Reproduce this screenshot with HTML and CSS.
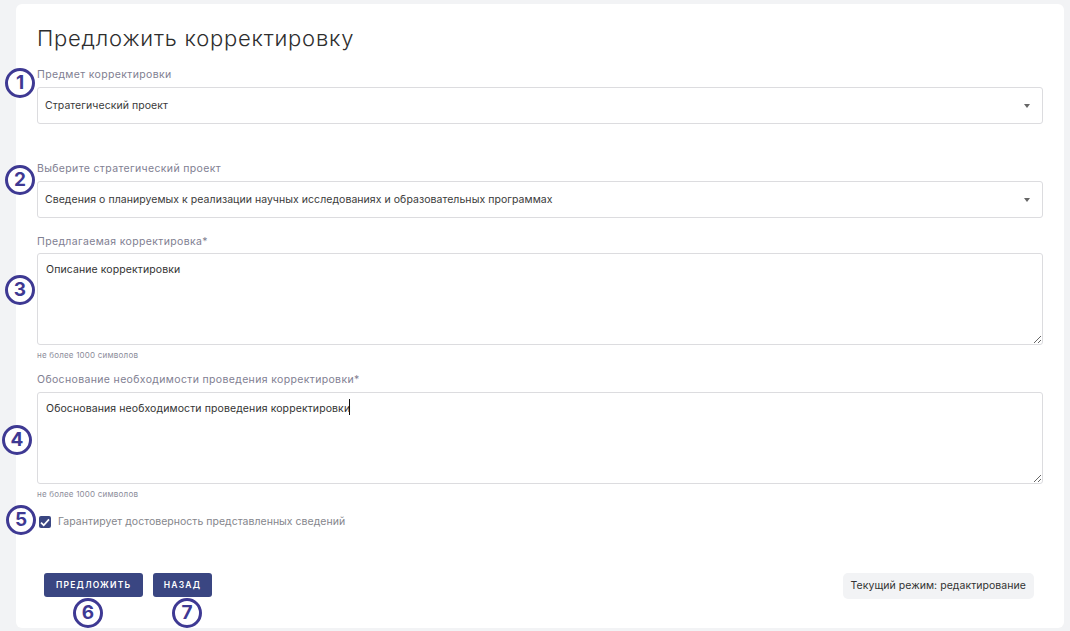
FILE: index.html
```html
<!DOCTYPE html>
<html lang="ru">
<head>
    <meta charset="UTF-8">
    <title>Предложить корректировку</title>
    <link rel="stylesheet" href="styles.css">
</head>
<body>
    <div class="card">
        <h1 class="title">Предложить корректировку</h1>

        <div class="field field-subject">
            <label class="field-label">Предмет корректировки</label>
            <div class="select-box">
                <span>Стратегический проект</span>
                <span class="select-arrow"></span>
            </div>
        </div>

        <div class="field field-project">
            <label class="field-label">Выберите стратегический проект</label>
            <div class="select-box">
                <span>Сведения о планируемых к реализации научных исследованиях и образовательных программах</span>
                <span class="select-arrow"></span>
            </div>
        </div>

        <div class="field field-text">
            <label class="field-label">Предлагаемая корректировка*</label>
            <textarea class="text-box" readonly>Описание корректировки</textarea>
            <p class="field-hint">не более 1000 символов</p>
        </div>

        <div class="field field-reason">
            <label class="field-label">Обоснование необходимости проведения корректировки*</label>
            <div class="text-wrap">
                <textarea class="text-box" readonly>Обоснования необходимости проведения корректировки</textarea>
                <span class="caret"></span>
            </div>
            <p class="field-hint">не более 1000 символов</p>
        </div>

        <label class="check-row">
            <span class="check-box">
                <svg width="10" height="9" viewBox="0 0 10 9"><path d="M1 4.6 3.7 7.2 9 1.4" fill="none" stroke="#fff" stroke-width="1.7"/></svg>
            </span>
            Гарантирует достоверность представленных сведений
        </label>

        <div class="footer">
            <div class="buttons">
                <button class="btn btn-main">ПРЕДЛОЖИТЬ</button>
                <button class="btn">НАЗАД</button>
            </div>
            <div class="mode-badge">Текущий режим: редактирование</div>
        </div>

        <span class="marker m1">1</span>
        <span class="marker m2">2</span>
        <span class="marker m3">3</span>
        <span class="marker m4">4</span>
        <span class="marker m5">5</span>
        <span class="marker m6">6</span>
        <span class="marker m7">7</span>
    </div>
</body>
</html>
```

FILE: styles.css
```css
* {
    box-sizing: border-box;
}

html, body {
    height: 100%;
}

body {
    margin: 0;
    padding: 4px 6px 3px 16px;
    background: #f2f3f5;
    font-family: Inter, "Open Sans", sans-serif;
    color: #2b2b2b;
    overflow: hidden;
}

.card {
    position: relative;
    height: 624px;
    padding: 21px 21px 0 21px;
    background: #fff;
    border-radius: 6px;
}

.title {
    margin: 0;
    font-size: 22px;
    line-height: 27px;
    font-weight: 300;
    letter-spacing: 0.77px;
    color: #2e2e2e;
}

.field-label {
    display: block;
    font-size: 10.5px;
    line-height: 14px;
    letter-spacing: 0.35px;
    color: #7f8092;
}

.field-subject {
    margin-top: 16px;
}

.field-project {
    margin-top: 38px;
}

.field-text {
    margin-top: 17px;
}

.field-reason {
    margin-top: 12px;
}

.select-box {
    display: flex;
    justify-content: space-between;
    align-items: center;
    height: 37px;
    margin-top: 5px;
    padding: 0 12px 0 7px;
    border: 1px solid #dcdcdf;
    border-radius: 3px;
    font-size: 10.5px;
    letter-spacing: 0.05px;
    color: #3a3a3a;
}

.select-arrow {
    width: 0;
    height: 0;
    border-left: 3.5px solid transparent;
    border-right: 3.5px solid transparent;
    border-top: 4px solid #666;
}

.text-wrap {
    position: relative;
}

.text-box {
    display: block;
    width: 100%;
    height: 92px;
    margin-top: 4px;
    padding: 8px;
    border: 1px solid #dcdcdf;
    border-radius: 3px;
    outline: none;
    font-family: inherit;
    font-size: 10.5px;
    line-height: 16px;
    letter-spacing: 0.1px;
    color: #333;
}

.field-reason .text-box {
    margin-top: 5px;
}

.caret {
    position: absolute;
    left: 312px;
    top: 7px;
    width: 1px;
    height: 16px;
    background: #111;
}

.field-hint {
    margin: 5px 0 0;
    font-size: 8px;
    line-height: 11px;
    letter-spacing: 0.2px;
    color: #8b8c9a;
}

.check-row {
    display: flex;
    align-items: center;
    gap: 7px;
    margin: 15px 0 0 2px;
    font-size: 10.5px;
    line-height: 14px;
    letter-spacing: 0.02px;
    color: #85868c;
}

.check-box {
    display: flex;
    align-items: center;
    justify-content: center;
    width: 12px;
    height: 12px;
    border-radius: 2px;
    background: #3a4682;
}

.footer {
    display: flex;
    justify-content: space-between;
    align-items: flex-start;
    margin-top: 44px;
    padding: 0 9px 0 7px;
}

.buttons {
    display: flex;
    gap: 10px;
}

.btn {
    height: 24px;
    padding: 0 10.5px;
    border: none;
    border-radius: 3px;
    background: #3a4682;
    color: #fff;
    font-family: inherit;
    font-size: 8.5px;
    font-weight: 600;
    letter-spacing: 1.2px;
}

.btn-main {
    padding: 0 12px;
}

.mode-badge {
    height: 26px;
    padding: 0 8px;
    border-radius: 5px;
    background: #f2f3f5;
    font-size: 10.5px;
    line-height: 26px;
    letter-spacing: 0.05px;
    color: #333;
}

/* numbered callouts drawn over the form */
.marker {
    position: absolute;
    width: 30px;
    height: 30px;
    border: 3px solid #3e3993;
    border-radius: 50%;
    background: #fff;
    color: #3e3993;
    font-size: 19px;
    font-weight: 700;
    line-height: 24px;
    text-align: center;
}

.m1 { left: -11px; top: 64px; }
.m2 { left: -11px; top: 161px; }
.m3 { left: -11px; top: 271px; }
.m4 { left: -14px; top: 421px; }
.m5 { left: -10px; top: 501px; }
.m6 { left: 57px; top: 594px; }
.m7 { left: 156px; top: 594px; }
```
